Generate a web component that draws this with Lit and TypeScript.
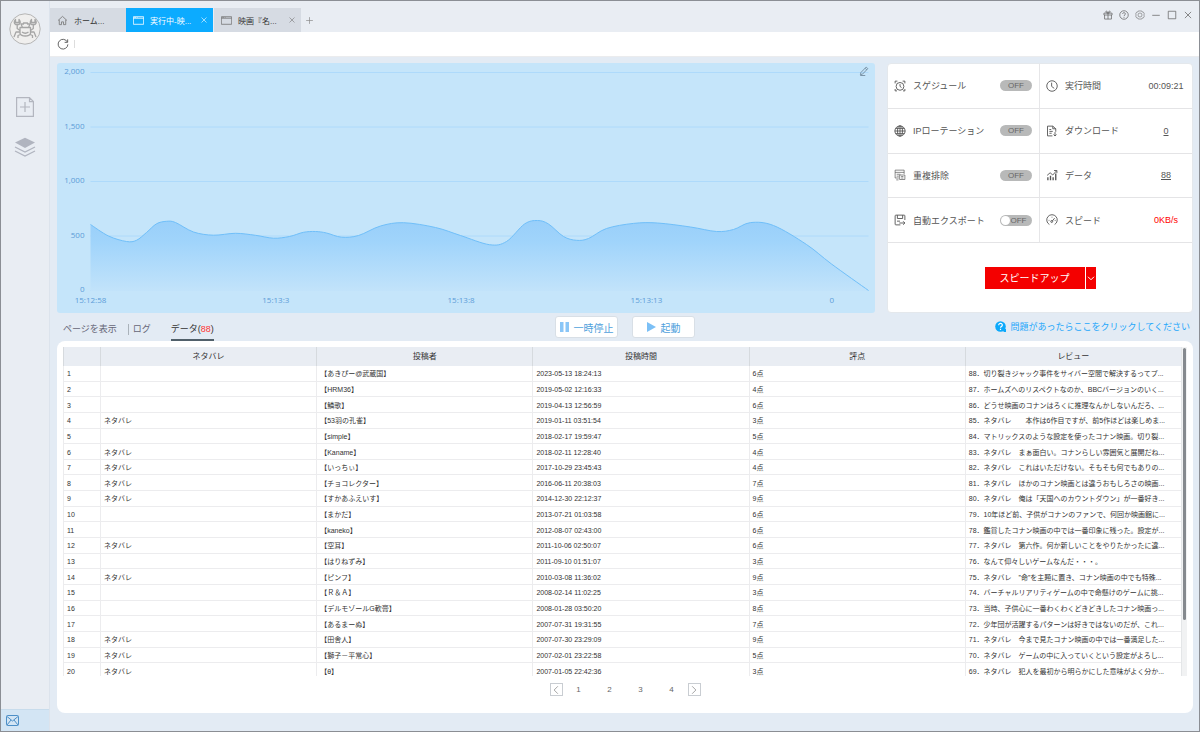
import { LitElement, html, svg, css } from "lit";
import { customElement, property, state } from "lit/decorators.js";
import { classMap } from "lit/directives/class-map.js";

const ICONS: Record<string, unknown> = {
  home: svg`<path d="M1.5 8 8 2l6.5 6M3.3 7v7h3.2v-4h3v4h3.2V7"/>`,
  page: svg`<path d="M.5 2.5h15v11H.5zM.5 4.7h15" /><path d="M2 3.6h2M5.500 3.600h1"/>`,
  close: svg`<path d="m3 3 10 10M13 3 3 13"/>`,
  plus: svg`<path d="M8 2v12M2 8h12"/>`,
  refresh: svg`<path d="M13.800 5.300A6.500 6.500 0 1 0 14.500 8.500"/><path d="M14.200 1.800v4h-4"/>`,
  gift: svg`<path d="M1.500 5h13v3h-13zM2.500 8v6.500h11V8M8 5v9.500M8 5C6 5 4 4 4.500 2.500S7.500 2 8 5c.5-3 3-4 3.500-2.500S10 5 8 5"/>`,
  help: svg`<circle cx="8" cy="8" r="6.800"/><path d="M5.800 6.300C5.800 3.500 10.300 3.600 10.200 6.300 10.200 8 8 8 8 9.700M8 11v1.500"/>`,
  gear: svg`<path d="M5.300 1.500h5.400l.8 1.700 1.900.2 1.600 2.900L14 8l1 1.700-1.600 2.900-1.900.2-.8 1.700H5.300l-.8-1.700-1.900-.2L1 9.700 2 8 1 6.300l1.600-2.900 1.900-.2z" stroke-width=".9"/><circle cx="8" cy="8" r="3.200" stroke-width=".9"/>`,
  min: svg`<path d="M2 8.500h12"/>`,
  max: svg`<path d="M2 2h12v12H2z"/>`,
  alarm: svg`<circle cx="8" cy="8.500" r="5.200"/><path d="M8 5.500v3l2 1.500M1.500 4.500v-3h3M14.500 4.500v-3h-3M1.500 12v2.500H4M14.500 12v2.500H12"/>`,
  clock: svg`<circle cx="8" cy="8" r="7"/><path d="M7.500 3.500v5l3.500 2.700"/>`,
  globe: svg`<circle cx="8" cy="8" r="6.800"/><path d="M8 1v14M1 8h14M2.300 4.500h11.400M2.300 11.500h11.400"/><ellipse cx="8" cy="8" rx="3.300" ry="6.800"/>`,
  download: svg`<path d="M8.500 14.500H2v-13h7l4 3.500v4M9 1.500V5h4M4.500 6h2.500M4.500 8.500H9M4.500 11h3M12 9.500v5M10 12.700l2 2 2-2"/>`,
  dedupe: svg`<path d="M13.500 6.500v-5h-12v10.500h5M1.500 4.500h12M3.500 7h5M3.500 9.500h3M7.500 8h7v6h-7zM9.500 10h3M9.500 12h3M3 14.500h3" stroke-width=".9"/>`,
  data: svg`<path d="M2.500 15v-4M6 15V9M9.500 15v-4M13 15V6" stroke-width="1.800"/><path d="M1.500 8.500 5.500 5l3.500 3 5-5.500M10.700 2h3.800v3.500"/>`,
  exporter: svg`<path d="M8.500 14.500h-6a1 1 0 0 1-1-1v-11a1 1 0 0 1 1-1h11a1 1 0 0 1 1 1V8M4.500 1.500v4.500h7V1.500M4 9.500h4M7 12h7.500M12.200 9.700l2.300 2.300-2.300 2.300"/>`,
  speed: svg`<path d="M4.500 14A7 7 0 1 1 11.500 14M8 9.800l3.500-4.300M3.500 8.500h1M11.600 8.500h1.200M8 3.700v1"/><circle cx="7.600" cy="10" r="1.300"/>`,
  pencil: svg`<path d="m3 10.500 8.500-8.800 2.600 2.500L5.600 13 2.200 13.800zM9.800 3.600l2.500 2.500M2 15.200h8"/>`,
  left: svg`<path d="M11 2 5 8l6 6"/>`,
  right: svg`<path d="m5 2 6 6-6 6"/>`,
  down: svg`<path d="m2 5.500 6 6 6-6" stroke-width="2"/>`,
};

@customElement("ui-icon")
export class UiIcon extends LitElement {
  static styles = css`
    :host { display: inline-flex; flex: none; width: 12px; height: 12px; }
    svg { width: 100%; height: 100%; fill: none; stroke: currentColor; stroke-width: 1.2; }
  `;
  @property() name = "";
  render() {
    return html`<svg viewBox="0 0 16 16" aria-hidden="true">${ICONS[this.name]}</svg>`;
  }
}

// Speed samples, [x, y] in the chart's own coordinates
const SAMPLES: [number, number][] = [
  [33, 161.5], [51, 173], [69, 178.5], [79, 177.3], [89, 169.5], [99, 160.8], [109, 158.3], [118, 159.5], [136, 169],
  [156, 172.2], [178, 170.3], [198, 172.3], [216, 175.2], [232, 173.5], [246, 169.3], [258, 168.5], [269, 170],
  [284, 174.2], [301, 172.5], [323, 163], [346, 159.7], [378, 164.5], [403, 172.5], [432, 181.7],
  [449, 178.5], [467, 161], [480, 157.5], [491, 161], [506, 173.5], [519, 177.3], [531, 175.5],
  [549, 165.5], [576, 160.4], [600, 160], [633, 164], [659, 168.5], [676, 166.5], [693, 159.6],
  [716, 162.5], [749, 181.5], [774, 201], [811, 227.5],
];

function smooth(points: [number, number][]): string {
  let d = `M${points[0].join(" ")}`;
  for (let i = 0; i < points.length - 1; i++) {
    const p0 = points[i - 1] ?? points[i];
    const [p1, p2] = [points[i], points[i + 1]];
    const p3 = points[i + 2] ?? p2;
    d += `C${p1[0] + (p2[0] - p0[0]) / 6} ${p1[1] + (p2[1] - p0[1]) / 6} ${p2[0] - (p3[0] - p1[0]) / 6} ${p2[1] - (p3[1] - p1[1]) / 6} ${p2[0]} ${p2[1]}`;
  }
  return d;
}

@customElement("speed-chart")
export class SpeedChart extends LitElement {
  static styles = css`
    :host { display: block; position: relative; background: #c5e5fa; border-radius: 3px; min-width: 0; }
    .plot { display: block; width: 100%; height: 250px; }
    text { font: 8px "Open Sans", "Noto Sans", sans-serif; fill: #5c9cd8; }
    .grid { stroke: #aedafb; }
    .line { fill: none; stroke: #70bff9; stroke-width: 1; }
    .edit { position: absolute; top: 3px; right: 6px; padding: 0; border: 0; background: none; color: #62798c; display: flex; }
    .edit ui-icon { width: 10px; height: 10px; }
  `;
  render() {
    const line = smooth(SAMPLES);
    const levels = ["2,000", "1,500", "1,000", "500", "0"];
    const times = ["15:12:58", "15:13:3", "15:13:8", "15:13:13", "0"];
    return html`
      <svg class="plot" viewBox="0 0 817 250" role="img" aria-label="スピード">
        <defs>
          <linearGradient id="fill" x1="0" y1="0" x2="0" y2="1">
            <stop offset="0" stop-color="#99cffa" /><stop offset=".3" stop-color="#a0d4fb" /><stop offset="1" stop-color="#c2e3fa" />
          </linearGradient>
        </defs>
        ${levels.map((l, i) => svg`
          <line class="grid" x1="33" x2="811" y1=${9.5 + i * 54.5} y2=${9.5 + i * 54.5} />
          <text x="27" y=${11 + i * 54.5} text-anchor="end">${l}</text>`)}
        <path d=${line + "V228H33Z"} fill="url(#fill)" />
        <path class="line" d=${line} />
        ${times.map((t, i) => svg`<text x=${33 + i * 185.3} y="240" text-anchor="middle">${t}</text>`)}
      </svg>
      <button class="edit" aria-label="編集"><ui-icon name="pencil"></ui-icon></button>
    `;
  }
}

@customElement("status-panel")
export class StatusPanel extends LitElement {
  static styles = css`
    :host { display: flex; flex-direction: column; background: #fff; border: 1px solid #e4e8ec; border-radius: 4px; box-sizing: border-box; color: #555; font-size: 9px; }
    .cells { display: grid; grid-template-columns: 1fr 1fr; grid-auto-rows: 1fr; height: 179px; }
    .cell { display: flex; align-items: center; padding: 0 7px 0 6px; border-bottom: 1px solid #e4e4e6; box-sizing: border-box; gap: 7px; }
    .cell:nth-child(odd) { border-right: 1px solid #e6e6e8; }
    .cell:nth-child(even) { padding-right: 4px; }
    .label { flex: 1; white-space: nowrap; }
    .value { width: 44px; text-align: center; color: #555; }
    a.value { text-decoration: underline; text-underline-offset: 1px; }
    .cell .alert { color: #f00; white-space: nowrap; }
    .toggle { display: grid; align-items: center; width: 32px; height: 11px; }
    .toggle > * { grid-area: 1 / 1; }
    .toggle input { appearance: none; margin: 0; width: 32px; height: 11px; border-radius: 6px; background: #b8b9b9; display: flex; }
    .toggle span { font-size: 8px; text-align: center; color: #666; pointer-events: none; line-height: 11px; }
    .knob input::before { content: ""; width: 9px; height: 9px; margin: 1px; border-radius: 50%; background: #fff; }
    .knob span { padding-left: 5px; }
    .boost { flex: 1; display: flex; align-items: center; justify-content: center; gap: 1px; }
    .boost button { height: 22px; border: 0; padding: 0; background: #f40000; color: #fff; font: inherit; font-size: 10px; }
    .boost .main { width: 100px; }
    .boost .more { width: 10px; display: flex; align-items: center; justify-content: center; }
    .boost ui-icon { width: 8px; height: 8px; }
  `;
  private toggle(icon: string, label: string, id: string, knob = false) {
    return html`<div class="cell">
      <ui-icon name=${icon}></ui-icon><label class="label" for=${id}>${label}</label>
      <div class="toggle ${classMap({ knob })}"><input id=${id} type="checkbox" role="switch" /><span>OFF</span></div>
    </div>`;
  }
  render() {
    return html`
      <div class="cells">
        ${this.toggle("alarm", "スゲジュール", "schedule")}
        <div class="cell"><ui-icon name="clock"></ui-icon><span class="label">実行時間</span><span class="value">00:09:21</span></div>
        ${this.toggle("globe", "IPローテーション", "rotation")}
        <div class="cell"><ui-icon name="download"></ui-icon><span class="label">ダウンロード</span><a class="value" href="#download">0</a></div>
        ${this.toggle("dedupe", "重複排除", "dedupe")}
        <div class="cell"><ui-icon name="data"></ui-icon><span class="label">データ</span><a class="value" href="#data">88</a></div>
        ${this.toggle("exporter", "自動エクスポート", "export", true)}
        <div class="cell"><ui-icon name="speed"></ui-icon><span class="label">スピード</span><span class="value alert">0KB/s</span></div>
      </div>
      <div class="boost">
        <button class="main">スピードアップ</button>
        <button class="more" aria-label="その他"><ui-icon name="down"></ui-icon></button>
      </div>
    `;
  }
}

// [spoiler flag, reviewer, posted at, score, review]
type Row = [boolean, string, string, number, string];
const ROWS: Row[] = [
  [false, "あきぴー@武蔵国", "2023-05-13 18:24:13", 6, "切り裂きジャック事件をサイバー空間で解決するってプ..."],
  [false, "HRM36", "2019-05-02 12:16:33", 4, "ホームズへのリスペクトなのか、BBCバージョンのいく..."],
  [false, "鱗歌", "2019-04-13 12:56:59", 6, "どうせ映画のコナンはろくに推理なんかしないんだろ、..."],
  [true, "53羽の孔雀", "2019-01-11 03:51:54", 3, "ネタバレ　　本作は6作目ですが、前5作ほどは楽しめま..."],
  [false, "simple", "2018-02-17 19:59:47", 5, "マトリックスのような設定を使ったコナン映画。切り裂..."],
  [true, "Kaname", "2018-02-11 12:28:40", 4, "ネタバレ　まぁ面白い。コナンらしい雰囲気と展開だね..."],
  [true, "いっちぃ", "2017-10-29 23:45:43", 4, "ネタバレ　これはいただけない。そもそも何でもありの..."],
  [true, "チョコレクター", "2016-06-11 20:38:03", 7, "ネタバレ　ほかのコナン映画とは違うおもしろさの映画..."],
  [true, "すかあふえいす", "2014-12-30 22:12:37", 9, "ネタバレ　俺は「天国へのカウントダウン」が一番好き..."],
  [false, "まかだ", "2013-07-21 01:03:58", 6, "10年ほど前、子供がコナンのファンで、何回か映画館に..."],
  [false, "kaneko", "2012-08-07 02:43:00", 6, "鑑賞したコナン映画の中では一番印象に残った。設定が..."],
  [true, "空耳", "2011-10-06 02:50:07", 6, "ネタバレ　第六作。何か新しいことをやりたかったに違..."],
  [false, "はりねずみ", "2011-09-10 01:51:07", 3, "なんて仰々しいゲームなんだ・・・。"],
  [true, "ピンフ", "2010-03-08 11:36:02", 9, "ネタバレ　”命”を主題に置き、コナン映画の中でも特殊..."],
  [false, "Ｒ＆Ａ", "2008-02-14 11:02:25", 3, "バーチャルリアリティゲームの中で命懸けのゲームに挑..."],
  [false, "デルモゾールG軟膏", "2008-01-28 03:50:20", 8, "当時、子供心に一番わくわくどきどきしたコナン映画っ..."],
  [false, "あるまーぬ", "2007-07-31 19:31:55", 7, "少年団が活躍するパターンは好きではないのだが、これ..."],
  [true, "田舎人", "2007-07-30 23:29:09", 9, "ネタバレ　今まで見たコナン映画の中では一番満足した..."],
  [true, "獅子－平常心", "2007-02-01 23:22:58", 5, "ネタバレ　ゲームの中に入っていくという設定がよろし..."],
  [true, "θ", "2007-01-05 22:42:36", 3, "ネタバレ　犯人を最初から明らかにした意味がよく分か..."],
];

@customElement("review-table")
export class ReviewTable extends LitElement {
  static styles = css`
    :host { display: flex; flex-direction: column; background: #fff; border-radius: 8px; padding: 6px 6px 0; min-height: 0; }
    .view { display: grid; grid-template-columns: minmax(0, 1fr) 6px; flex: 0 1 329px; min-height: 0; overflow: hidden; }
    table { width: 100%; height: 332px; border-collapse: separate; border-spacing: 0; table-layout: fixed; font-size: 7px; line-height: 10px; color: #333; }
    .num { width: 37px; }
    th { height: 19px; padding: 0; font-weight: 400; font-size: 8px; background: #e9edf3; border-left: 1px solid #d6dade; box-sizing: border-box; }
    td { padding: 2px 2px 0 3px; border-left: 1px solid #ececee; border-bottom: 1px solid #ececee; box-sizing: border-box; white-space: nowrap; overflow: hidden; }
    td:last-child { text-overflow: ellipsis; padding-right: 0; }
    .bar { background: #f1f2f3; padding-top: 1px; display: flex; justify-content: center; box-sizing: border-box; border-left: 1px solid #e4e6e8; }
    .thumb { width: 3px; height: 272px; border-radius: 2px; background: #85898e; }
    .pages { display: flex; justify-content: center; align-items: center; gap: 1px; padding-top: 7px; }
    .pages button { border: 0; padding: 0; background: none; font: inherit; font-size: 8px; color: #666; width: 30px; height: 13px; }
    .pages .step { width: 13px; border: 1px solid #c9cdd2; display: flex; align-items: center; justify-content: center; color: #888; }
    .pages ui-icon { width: 10px; height: 10px; }
  `;
  @state() private total = 88;
  render() {
    return html`
      <div class="view">
        <table>
          <thead><tr><th class="num"></th><th>ネタバレ</th><th>投稿者</th><th>投稿時間</th><th>評点</th><th>レビュー</th></tr></thead>
          <tbody>
            ${ROWS.map(([spoiler, name, time, score, text], i) => html`<tr>
              <td>${i + 1}</td><td>${spoiler ? "ネタバレ" : ""}</td><td>【${name}】</td><td>${time}</td><td>${score}点</td><td>${this.total - i}．${text}</td>
            </tr>`)}
          </tbody>
        </table>
        <div class="bar"><div class="thumb"></div></div>
      </div>
      <nav class="pages" aria-label="ページ">
        <button class="step" aria-label="前へ"><ui-icon name="left"></ui-icon></button>
        ${[1, 2, 3, 4].map((n) => html`<button>${n}</button>`)}
        <button class="step" aria-label="次へ"><ui-icon name="right"></ui-icon></button>
      </nav>
    `;
  }
}

@customElement("app-root")
export class AppRoot extends LitElement {
  static styles = css`
    :host { display: grid; grid-template-columns: 49px 1fr; height: 100vh; min-height: 560px; box-sizing: border-box; border: 1px solid #8b8e94; background: #e3ebf4; font-family: "Liberation Sans", "Noto Sans CJK JP", sans-serif; color: #444; }
    button { font: inherit; border: 0; padding: 0; background: none; color: inherit; }
    .side { background: #e9edf3; border-right: 1px solid #dce3ec; display: flex; flex-direction: column; align-items: center; }
    .logo { margin-top: 12px; width: 32px; height: 32px; }
    .tool { display: flex; }
    .tool.add { margin-top: 52px; }
    .tool.stack { margin-top: 20px; }
    .mail { margin-top: auto; align-self: stretch; height: 22px; padding-left: 5px; display: flex; align-items: center; background: #d3e5f4; border-top: 1px solid #c8dcec; }
    .main { display: flex; flex-direction: column; min-width: 0; min-height: 0; }
    .head { display: flex; align-items: flex-end; height: 31px; background: #e9edf3; }
    .tab { display: flex; align-items: center; height: 24px; width: 88px; box-sizing: border-box; padding: 0 5px 0 7px; background: #d6dbe3; font-size: 8px; gap: 6px; color: #333; border-left: 1px solid #e9edf3; }
    .tab .name { flex: 1; text-align: left; white-space: nowrap; }
    .tab ui-icon { width: 11px; height: 11px; color: #777; }
    .tab .x ui-icon, .tab .x { width: 8px; height: 8px; display: flex; }
    .tab.home { width: 76px; border: 0; }
    .tab.on { width: 87px; border: 0; background: #0cabff; color: #fff; }
    .tab.on ui-icon { color: #fff; }
    .new { height: 24px; padding: 0 4px; display: flex; align-items: center; color: #888; }
    .new ui-icon { width: 9px; height: 9px; }
    .window { margin-left: auto; align-self: center; display: flex; gap: 6px; padding: 0 6px 3px 0; color: #666; }
    .window button { display: flex; }
    .window ui-icon { width: 10px; height: 10px; }
    .bar { display: flex; align-items: center; height: 24px; background: #fff; padding: 0 7px; gap: 5px; color: #555; border-bottom: 1px solid #ebecee; }
    .bar button { display: flex; }
    .bar i { width: 1px; height: 8px; background: #ddd; }
    .body { flex: 1; min-height: 0; display: flex; flex-direction: column; padding: 6px 6px 18px 7px; }
    .top { display: grid; grid-template-columns: minmax(0, 1fr) 306px; gap: 12px; }
    .mid { display: grid; grid-template-columns: 1fr auto 1fr; height: 28px; align-items: center; font-size: 9px; }
    .views { display: flex; align-self: end; padding-left: 6px; color: #667; }
    .views a { color: inherit; text-decoration: none; height: 19px; line-height: 15px; box-sizing: border-box; padding-right: 11px; }
    .views a + a { padding: 0 0 0 5px; background: linear-gradient(#aab2ba, #aab2ba) 0 2px / 1px 11px no-repeat; }
    .views a.on { margin-left: 20px; padding: 0; background: none; color: #333; border-bottom: 2px solid #51606a; }
    .views b { font-weight: 400; color: #f33; }
    .run { display: flex; gap: 14px; }
    .run button { width: 63px; height: 22px; display: flex; align-items: center; justify-content: center; gap: 5px; background: #fff; border: 1px solid #d8dfe6; border-radius: 3px; color: #4f9fdc; font-size: 10px; }
    .ask { justify-self: end; display: flex; align-items: center; gap: 5px; padding: 0 3px 2px 0; color: #1ea7fb; text-decoration: none; }
    review-table { flex: 1; }
  `;
  render() {
    return html`
      <aside class="side">
        <svg class="logo" viewBox="0 0 32 32" fill="none" stroke="#a6a6a6" stroke-width="1.300" stroke-linejoin="round">
          <circle cx="16" cy="16" r="15.200" fill="#f0efee" stroke="#b5b5b5" stroke-width="1" />
          <path d="M11 14.500h10.500v6q-1 2.500-5.200 2.500T11 20.500zM13.500 14.500l-1.500-3.500h2.500v-1h4v1H21l-1.500 3.500M13 19q3.300 2.500 6.500 0" />
          <path d="M11 17.500 8.200 15.500v-4M21.500 17.500l2.800-2v-4M11 19H7l-2 5M21.500 19H25l2 5M11.500 21.500 9 22.500v2.500M21 21.500l2.500 1v2.500" />
          <path d="M6.500 6.500v3h3.500v-3q2.500 3 0 5H6.500q-2.500-2 0-5zM22.500 6.500v3H26v-3q2.500 3 0 5h-3.500q-2.500-2 0-5z" />
        </svg>
        <button class="tool add" aria-label="新規">
          <svg width="18" height="20" viewBox="0 0 18 20" fill="none" stroke="#b3b6bf" stroke-width="1.200"><path d="M.6.6h12.900l3.900 4v14.800H.6zM13.500.6v4h3.900M9 5v10M4 10h10" /></svg>
        </button>
        <button class="tool stack" aria-label="タスク">
          <svg width="22" height="20" viewBox="0 0 22 20" fill="none" stroke="#b0b4bf" stroke-width="1.300"><path d="M11 .8 21 5.500 11 11 1 5.500z" fill="#b0b4bf" stroke="none" /><path d="m1 10 10 5 10-5M1 14l10 5 10-5" /></svg>
        </button>
        <button class="mail" aria-label="メール">
          <svg width="13" height="11" viewBox="0 0 13 11" fill="none" stroke="#4d8fc7"><rect x=".5" y=".5" width="12" height="10" rx="1" /><path d="m1 1.500 5.500 4.500L12 1.500M1 10l4-5M12 10 8 5" /></svg>
        </button>
      </aside>
      <main class="main">
        <header class="head">
          <button class="tab home"><ui-icon name="home"></ui-icon><span class="name">ホーム...</span></button>
          <div class="tab on"><ui-icon name="page"></ui-icon><span class="name">実行中-映...</span><button class="x" aria-label="閉じる"><ui-icon name="close"></ui-icon></button></div>
          <div class="tab"><ui-icon name="page"></ui-icon><span class="name">映画『名...</span><button class="x" aria-label="閉じる"><ui-icon name="close"></ui-icon></button></div>
          <button class="new" aria-label="新しいタブ"><ui-icon name="plus"></ui-icon></button>
          <div class="window">
            ${[["gift", "特典"], ["help", "ヘルプ"], ["gear", "設定"], ["min", "最小化"], ["max", "最大化"], ["close", "閉じる"]].map(
              ([name, label]) => html`<button aria-label=${label}><ui-icon name=${name}></ui-icon></button>`,
            )}
          </div>
        </header>
        <div class="bar"><button aria-label="更新"><ui-icon name="refresh"></ui-icon></button><i></i></div>
        <div class="body">
          <section class="top"><speed-chart></speed-chart><status-panel></status-panel></section>
          <section class="mid">
            <nav class="views"><a href="#page">ページを表示</a><a href="#log">ログ</a><a class="on" href="#data">データ(<b>88</b>)</a></nav>
            <div class="run">
              <button><svg width="9" height="10" viewBox="0 0 9 10" fill="#8ac6f7"><path d="M0 0h3.500v10H0zM5.500 0H9v10H5.500z" /></svg>一時停止</button>
              <button><svg width="9" height="10" viewBox="0 0 9 10" fill="#7cc0f6"><path d="m0 0 9 5-9 5z" /></svg>起動</button>
            </div>
            <a class="ask" href="#help">
              <svg width="11" height="11" viewBox="0 0 11 11"><circle cx="5.500" cy="5.500" r="5.300" fill="#0ca9fb" /><path d="M6 8h5v3H9z" fill="#0ca9fb" /><path d="M3.700 4.200c0-2.400 3.700-2.300 3.600 0 0 1.200-1.800 1.300-1.800 2.500M5.500 7.800v1.200" fill="none" stroke="#fff" stroke-width="1.200" /></svg>
              問題があったらここをクリックしてください
            </a>
          </section>
          <review-table></review-table>
        </div>
      </main>
    `;
  }
}
